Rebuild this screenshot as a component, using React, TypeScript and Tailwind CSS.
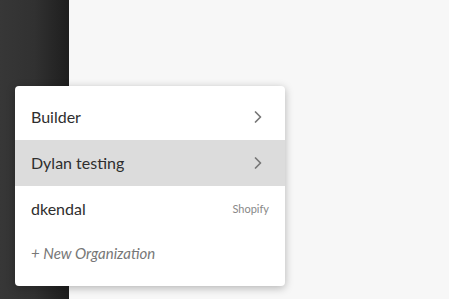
import { ChevronRight } from 'lucide-react'

const orgs = [
  { name: 'Builder', active: false, sub: true },
  { name: 'Dylan testing', active: true, sub: true },
  { name: 'dkendal', active: false, tag: 'Shopify' },
]

export default function App() {
  return (
    <div className="flex h-[299px] w-[449px] overflow-hidden bg-[#f7f7f7] font-['Lato',sans-serif]">
      {/* Sidebar */}
      <div className="h-full w-[69px] shrink-0 bg-gradient-to-r from-[#373737] via-[#313131] to-[#1e1e1e]" />

      <div className="flex-1" />

      {/* Org menu */}
      <div className="absolute left-[15px] top-[86px] w-[270px] rounded bg-white py-2 shadow-[0_2px_8px_rgba(0,0,0,0.28)]">
        {orgs.map((o) => (
          <div
            key={o.name}
            className={`flex h-[46px] items-center justify-between pl-4 pr-4 ${o.active ? 'bg-[#dcdcdc]' : ''}`}
          >
            <span className="text-[16px] text-[#2e2e2e]">{o.name}</span>
            {o.sub && <ChevronRight size={20} strokeWidth={2.1} className="mr-[1px] text-[#777]" />}
            {o.tag && <span className="text-[11px] text-[#888]">{o.tag}</span>}
          </div>
        ))}
        <div className="flex h-[46px] items-center pl-4 pb-[3px]">
          <span className="text-[15px] italic text-[#777]">+ New Organization</span>
        </div>
      </div>
    </div>
  )
}
